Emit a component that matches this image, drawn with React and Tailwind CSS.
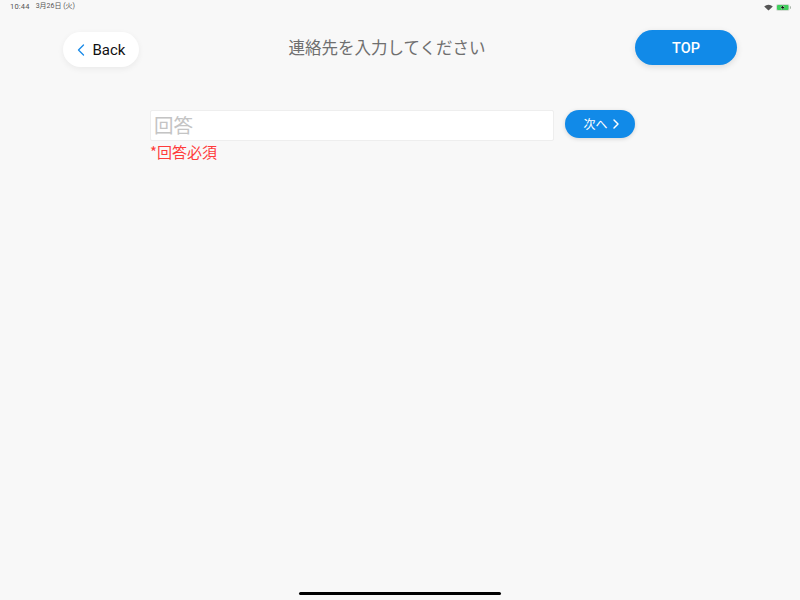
import { ChevronLeft, ChevronRight } from 'lucide-react';

const jp = { fontFamily: '"Noto Sans CJK JP", sans-serif' };

const StatusBar = () => (
  <div className="flex h-[14px] items-center justify-between pl-[10px] pr-[9px] text-[7.5px] text-[#555]">
    <div className="flex gap-[6px]" style={{ fontFamily: '"Roboto", "Noto Sans CJK JP", sans-serif' }}>
      <span className="tracking-[0.2px]">10:44</span>
      <span className="text-[7px]">3月26日 (火)</span>
    </div>
    <div className="flex items-center gap-[3px]">
      <svg width="9" height="7" viewBox="0 0 9 7">
        <path d="M4.5 6.6 L0.2 2.4 A6.2 6.2 0 0 1 8.8 2.4 Z" fill="#555" />
      </svg>
      <svg width="15" height="7" viewBox="0 0 15 7">
        <rect x="0" y="0" width="13.5" height="7" rx="1.8" fill="#d5ddd5" />
        <rect x="1" y="1" width="11.5" height="5" rx="1" fill="#3ecf5c" />
        <rect x="14" y="2.2" width="1" height="2.6" rx="0.4" fill="#aab5aa" />
        <path d="M7.6 0.8 L4.8 3.9 H6.6 L5.8 6.2 L8.7 3.1 H6.9 Z" fill="#111" stroke="#e8f5e8" strokeWidth="0.5" paintOrder="stroke" />
      </svg>
    </div>
  </div>
);

export default function App() {
  return (
    <div className="flex h-[600px] w-[800px] flex-col overflow-hidden bg-[#f8f8f8]" style={jp}>
      <StatusBar />

      <div className="flex items-start px-[63px] pt-4">
        <button
          className="mt-[2px] flex h-[35px] w-[76px] items-center justify-center gap-[2px] rounded-full bg-white pr-[6px] text-[15px] text-[#111] shadow-[0_2px_6px_rgba(0,0,0,0.06)]"
          style={{ fontFamily: '"Roboto", sans-serif' }}
        >
          <ChevronLeft size={20} strokeWidth={1.6} className="text-[#1a8ae8]" />
          <span className="mt-[2px]">Back</span>
        </button>
        <h1 className="flex-1 pt-[4px] text-center text-[16.5px] leading-[26px] font-normal text-[#6f6f6f]">
          連絡先を入力してください
        </h1>
        <button
          className="h-[35px] w-[102px] rounded-full bg-[#118ae8] pt-[2px] text-[14.5px] font-medium text-white shadow-[0_2px_6px_rgba(0,0,0,0.12)]"
          style={{ fontFamily: '"Roboto", sans-serif' }}
        >
          TOP
        </button>
      </div>

      <div className="mt-[43px] flex items-start pl-[150px]">
        <div className="flex flex-col">
          <div className="flex h-[31px] w-[404px] items-center rounded-[2px] border border-[#eeeeee] bg-white pb-[2px] pl-[3px] text-[19.5px] text-[#c4c4c4]">
            回答
          </div>
          <p className="text-[15px] leading-[22px] text-[#ff3b3b]">*回答必須</p>
        </div>
        <button className="ml-[11px] flex h-[28px] w-[70px] items-center justify-center rounded-full bg-[#118ae8] pl-[7px] text-[12px] text-white shadow-[0_1px_4px_rgba(0,0,0,0.15)]">
          次へ
          <ChevronRight size={16} strokeWidth={2.2} />
        </button>
      </div>

      <div className="mt-auto mb-[5px] flex justify-center">
        <div className="h-[3px] w-[202px] rounded-full bg-black" />
      </div>
    </div>
  );
}
